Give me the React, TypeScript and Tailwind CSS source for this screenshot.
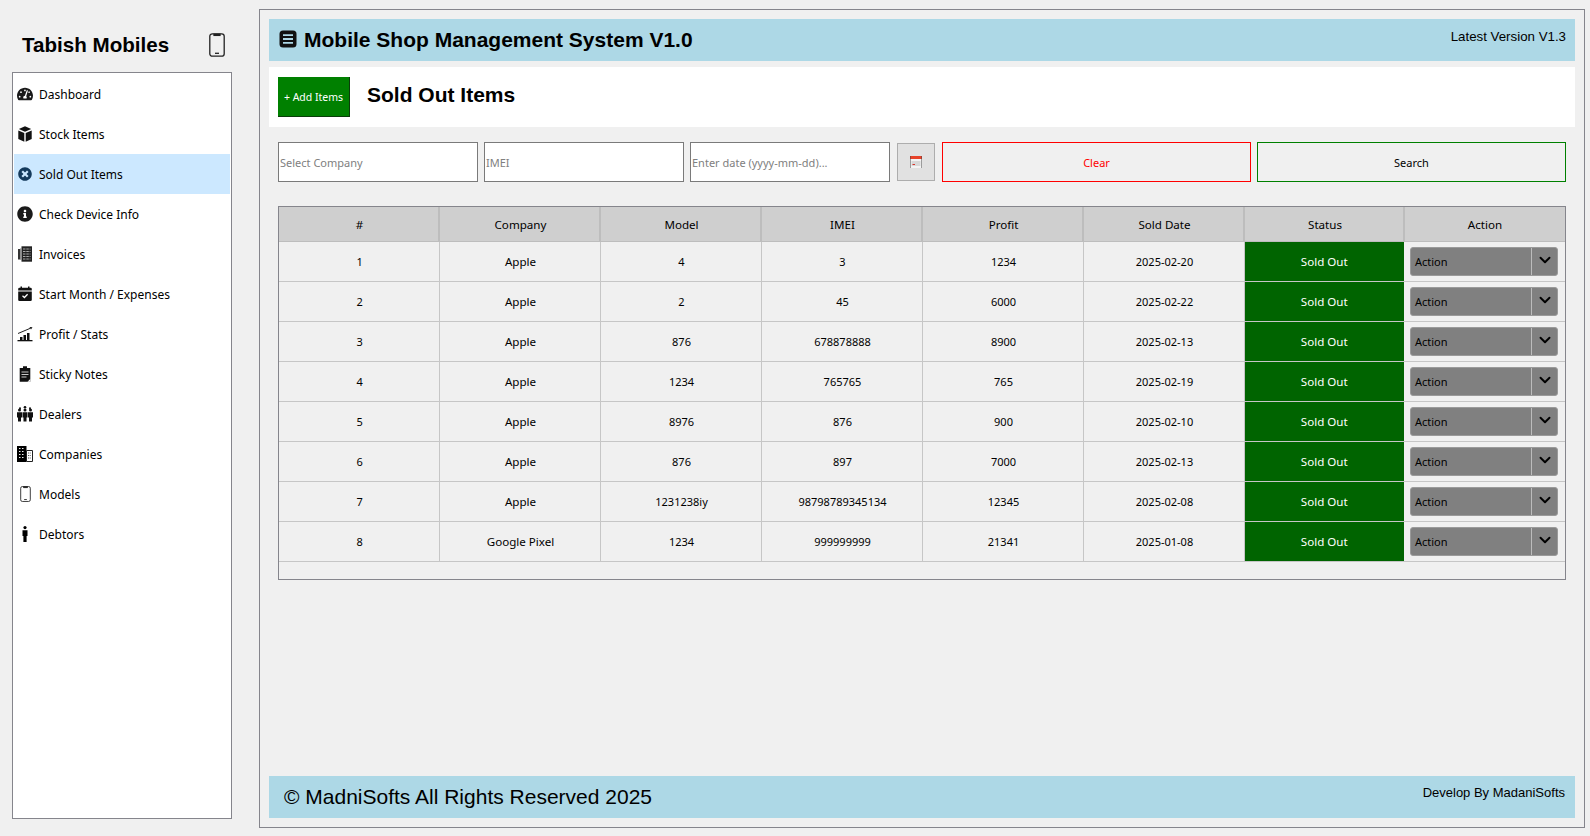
import { ChevronDown } from "lucide-react";
import { FaInfoCircle, FaTachometerAlt, FaTimesCircle } from "react-icons/fa";
import { ReactNode } from "react";

const PhoneIcon = ({ className }: { className?: string }) => (
  <svg viewBox="0 0 16 24" className={className} fill="none" stroke="#222" strokeWidth="1.3">
    <rect x="0.8" y="0.8" width="14.4" height="22.4" rx="2.5" />
    <path d="M5 1.2h6v1.2H5z" fill="#222" />
    <path d="M6 20.3h4" />
  </svg>
);

const CubeIcon = () => (
  <svg viewBox="0 0 16 16" className="w-4 h-4" fill="#111">
    <path d="M8 0.300 14.200 2.900 8 5.700 1.800 2.900z" />
    <path d="M1.300 4.400 7.300 7.100V15.700L1.300 13z" />
    <path d="M14.700 4.400 8.700 7.100V15.700L14.700 13z" />
  </svg>
);

const InvoiceIcon = () => (
  <svg viewBox="0 0 16 16" className="w-4 h-4">
    <path d="M4.500 0.300h10.500v15.400H4.500z" fill="#222" />
    <path d="M1 3h2.500v10.500H1z" fill="#333" />
    <path d="M3.500 2h1v12h-1z" fill="#888" />
    <path d="M6 3h7.500M6 5.500h7.500M6 8h7.500M6 10.500h7.500M6 13h7.500" stroke="#bbb" strokeWidth="0.9" strokeDasharray="2.500 0.800" />
  </svg>
);

const CalendarIcon = () => (
  <svg viewBox="0 0 16 16" className="w-4 h-4" fill="#111">
    <path d="M3.500 0.500h1.500v2H3.500zM11 0.500h1.500v2H11z" />
    <path d="M2.500 1.800h11A1.300 1.300 0 0 1 14.800 3.100V4.500H1.200V3.100A1.300 1.300 0 0 1 2.500 1.800z" />
    <path d="M1.200 5.500H14.800V13.700A1.300 1.300 0 0 1 13.500 15H2.500A1.300 1.300 0 0 1 1.200 13.700z" />
    <path d="M5.500 9.800 7.400 11.500 10.600 8.200" stroke="#fff" strokeWidth="1.300" fill="none" />
  </svg>
);

const ProfitIcon = () => (
  <svg viewBox="0 0 16 16" className="w-4 h-4" fill="#111">
    <path d="M1 7.500 13.500 2.200" stroke="#222" strokeWidth="1" fill="none" />
    <path d="M12.500 1 15.500 1.200 14 3.600z" />
    <path d="M3 11h2.500v3H3zM6.500 9h2.500v5H6.500zM10 7h2.500v7H10z" />
    <path d="M0.500 14h15v1.300h-15z" />
  </svg>
);

const NotesIcon = () => (
  <svg viewBox="0 0 16 16" className="w-4 h-4">
    <path d="M6 0.200h4V2h3.300V15.800H2.700V2H6z" fill="#111" />
    <path d="M4.500 6h7M4.500 8.500h7M4.500 11h5" stroke="#ddd" strokeWidth="0.900" />
    <path d="M10.500 15.800 13.300 13V15.800z" fill="#fff" />
  </svg>
);

const person = (x: number, y: number) => (
  <g key={`${x}-${y}`} transform={`translate(${x} ${y})`}>
    <circle cx="2.500" cy="1.500" r="1.500" />
    <path d="M0 3.700h5V9H4V13H1V9H0z" />
  </g>
);

const DealersIcon = () => (
  <svg viewBox="0 0 16 16" className="w-4 h-4" fill="#111">
    <circle cx="8" cy="1.300" r="1.300" />
    <circle cx="3" cy="2.300" r="1" />
    <circle cx="13" cy="2.300" r="1" />
    {person(0, 2.500)}
    {person(5.500, 2.500)}
    {person(11, 2.500)}
  </svg>
);

const CompaniesIcon = () => (
  <svg viewBox="0 0 16 16" className="w-4 h-4">
    <path d="M0 0h9.500v16H0z" fill="#000" />
    <path d="M2 2.500h1.500M5 2.500h1.500M2 5.500h1.500M5 5.500h1.500M2 8.500h1.500M5 8.500h1.500M2 11.500h1.500M5 11.500h1.500" stroke="#eee" strokeWidth="1" />
    <path d="M9.500 4.500h6v11h-6z" fill="#fff" stroke="#222" strokeWidth="1" />
    <path d="M11 7h3M11 9.500h3M11 12h3" stroke="#555" strokeWidth="1" strokeDasharray="1 0.700" />
  </svg>
);

const DebtorIcon = () => (
  <svg viewBox="0 0 16 16" className="w-4 h-4" fill="#000">
    <circle cx="8" cy="1.600" r="1.600" />
    <path d="M5.500 4.200h5V10H9.600V16H6.400V10H5.500z" />
  </svg>
);

const menu: { label: string; icon: ReactNode; active?: boolean }[] = [
  { label: "Dashboard", icon: <FaTachometerAlt className="w-4 h-4" /> },
  { label: "Stock Items", icon: <CubeIcon /> },
  { label: "Sold Out Items", icon: <FaTimesCircle className="w-[14px] h-[14px] text-[#143a5c]" />, active: true },
  { label: "Check Device Info", icon: <FaInfoCircle className="w-4 h-4" /> },
  { label: "Invoices", icon: <InvoiceIcon /> },
  { label: "Start Month / Expenses", icon: <CalendarIcon /> },
  { label: "Profit / Stats", icon: <ProfitIcon /> },
  { label: "Sticky Notes", icon: <NotesIcon /> },
  { label: "Dealers", icon: <DealersIcon /> },
  { label: "Companies", icon: <CompaniesIcon /> },
  { label: "Models", icon: <PhoneIcon className="w-[11px] h-4" /> },
  { label: "Debtors", icon: <DebtorIcon /> },
];

const rows = [
  ["1", "Apple", "4", "3", "1234", "2025-02-20"],
  ["2", "Apple", "2", "45", "6000", "2025-02-22"],
  ["3", "Apple", "876", "678878888", "8900", "2025-02-13"],
  ["4", "Apple", "1234", "765765", "765", "2025-02-19"],
  ["5", "Apple", "8976", "876", "900", "2025-02-10"],
  ["6", "Apple", "876", "897", "7000", "2025-02-13"],
  ["7", "Apple", "1231238iy", "98798789345134", "12345", "2025-02-08"],
  ["8", "Google Pixel", "1234", "999999999", "21341", "2025-01-08"],
];

const headers = ["#", "Company", "Model", "IMEI", "Profit", "Sold Date", "Status", "Action"];

const App = () => {
  return (
    <div className="h-[836px] w-[1590px] flex bg-[#f0f0f0] text-black text-[12px] font-['Noto_Sans',sans-serif] overflow-hidden">
      {/* Sidebar */}
      <aside className="w-[259px] shrink-0 pl-3 flex flex-col">
        <div className="h-[72px] w-[220px] pt-[33px] pl-[10px] pr-[7px] flex items-start justify-between">
          <span className="font-['Liberation_Sans',sans-serif] font-bold text-[20.6px] leading-[24px]">Tabish Mobiles</span>
          <PhoneIcon className="w-4 h-6" />
        </div>
        <nav className="w-[220px] h-[747px] border border-[#85858c] bg-white p-px">
          {menu.map((item) => (
            <div key={item.label} className={`h-10 flex items-center pl-[3px] ${item.active ? "bg-[#cce8ff]" : ""}`}>
              <span className="w-[16px] flex justify-center text-[#1a1a1a]">{item.icon}</span>
              <span className="ml-[6px] pt-[2px]">{item.label}</span>
            </div>
          ))}
        </nav>
      </aside>

      {/* Main panel */}
      <main className="w-[1326px] h-[819px] mt-[9px] border border-[#85858c] p-[9px] flex flex-col">
        <header className="h-[42px] bg-[#add8e6] flex justify-between font-['Liberation_Sans',sans-serif]">
          <div className="flex items-center pl-[10px] gap-[7px]">
            <svg viewBox="0 0 18 18" className="w-[18px] h-[18px] -mt-[2px]">
              <rect x="0.500" y="0.500" width="17" height="17" rx="3.500" fill="#111" />
              <path d="M4 5.200h10M4 9h10M4 12.800h10" stroke="#add8e6" strokeWidth="1.800" />
            </svg>
            <h1 className="font-bold text-[21px] leading-none -mt-[2px]">Mobile Shop Management System V1.0</h1>
          </div>
          <span className="text-[13.3px] pt-[10px] pr-[9px] leading-[16px]">Latest Version V1.3</span>
        </header>

        <div className="h-[60px] mt-[6px] bg-white flex items-center pl-[9px]">
          <button className="w-[72px] h-10 bg-[#008000] text-white border-r border-b border-[#0a3d0a] text-[10.5px] pt-[3px]">+ Add Items</button>
          <h2 className="ml-[17px] font-['Liberation_Sans',sans-serif] font-bold text-[21px] -mt-[4px]">Sold Out Items</h2>
        </div>

        <div className="mt-[15px] mx-[9px] h-10 flex items-center text-[11px]">
          <input placeholder="Select Company" className="w-[200px] h-10 bg-white border border-[#7a7a7a] px-[1px] pt-[1px] placeholder:text-[#808080] outline-none" />
          <input placeholder="IMEI" className="w-[200px] h-10 ml-[6px] bg-white border border-[#7a7a7a] px-[1px] pt-[1px] placeholder:text-[#808080] outline-none" />
          <input placeholder="Enter date (yyyy-mm-dd)..." className="w-[200px] h-10 ml-[6px] bg-white border border-[#7a7a7a] px-[1px] pt-[1px] placeholder:text-[#808080] outline-none" />
          <button className="w-[38px] h-[38px] ml-[7px] bg-[#e1e1e1] border border-[#adadad] flex items-center justify-center">
            <svg viewBox="0 0 12 12" className="w-3 h-3">
              <rect width="12" height="12" fill="#f4f4f4" />
              <rect width="12" height="3" fill="#e8432a" />
              <rect x="1.500" y="5" width="9" height="5" fill="#d8d8d8" />
              <rect x="2.500" y="8" width="2.500" height="1" fill="#d9342b" />
              <path d="M0 0v12M12 0v12" stroke="#444" strokeWidth="1" />
            </svg>
          </button>
          <button className="w-[309px] h-10 ml-[7px] border border-[#ff0000] text-[#ff0000] pt-[3px]">Clear</button>
          <button className="w-[309px] h-10 ml-[6px] border border-[#008000] pt-[3px]">Search</button>
        </div>

        <div className="mt-[24px] mx-[9px] h-[374px] border border-[#85858c]">
          <table className="w-full table-fixed border-collapse text-[11px]">
            <colgroup>
              <col className="w-[160px]" />
              <col className="w-[161px]" />
              <col className="w-[161px]" />
              <col className="w-[161px]" />
              <col className="w-[161px]" />
              <col className="w-[161px]" />
              <col className="w-[160px]" />
              <col />
            </colgroup>
            <thead>
              <tr className="h-[34px] bg-[#cfcfcf]">
                {headers.map((h) => (
                  <th key={h} className="font-normal text-[11.6px] pt-[2px] pl-[2px] pr-0 pb-0 border-r-2 border-b border-[#bdbdbd] last:border-r-0 last:pl-0">{h}</th>
                ))}
              </tr>
            </thead>
            <tbody>
              {rows.map((row) => (
                <tr key={row[0]} className="h-10">
                  {row.map((cell, i) => (
                    <td key={i} className={`text-center border-r border-b border-[#c6c6c6] pl-[2px] pr-0 pb-0 pt-[2px] ${i === 1 ? "text-[11.6px]" : ""}`}>{cell}</td>
                  ))}
                  <td className="text-center text-[11.6px] bg-[#006400] text-white border-b border-[#c6c6c6] px-0 pb-0 pt-[2px]">Sold Out</td>
                  <td className="border-b border-[#c6c6c6] p-0">
                    <div className="ml-[6px] w-[148px] h-[29px] bg-[#808080] border border-[#9a9a9a] rounded-[3px] flex items-center">
                      <span className="flex-1 pl-[4px] pt-[2px]">Action</span>
                      <span className="w-[26px] h-full border-l border-[#bcbcbc] flex items-center justify-center">
                        <ChevronDown className="w-[18px] h-[18px] -mt-[2px] text-black" strokeWidth={2.6} />
                      </span>
                    </div>
                  </td>
                </tr>
              ))}
            </tbody>
          </table>
        </div>

        <footer className="h-[42px] mt-auto bg-[#add8e6] flex justify-between font-['Liberation_Sans',sans-serif]">
          <span className="text-[21px] leading-[42px] pl-[15px]">© MadniSofts All Rights Reserved 2025</span>
          <span className="text-[13px] pt-[9px] pr-[10px] leading-[16px]">Develop By MadaniSofts</span>
        </footer>
      </main>
    </div>
  );
};

export default App;
